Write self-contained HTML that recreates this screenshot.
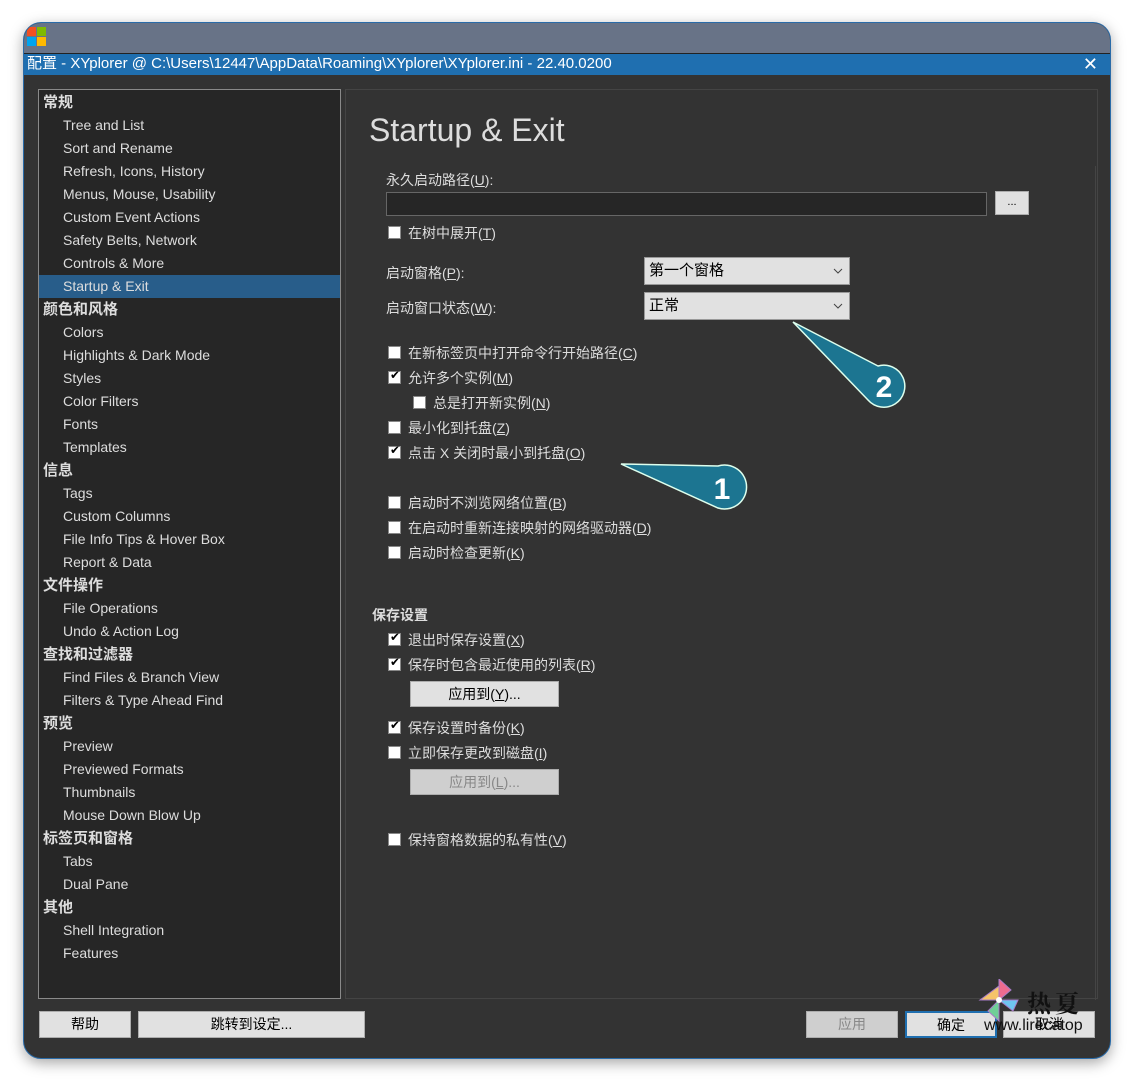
<!DOCTYPE html>
<html><head><meta charset="utf-8"><style>
*{margin:0;padding:0;box-sizing:border-box}
body{width:1134px;height:1082px;background:#fff;position:relative;overflow:hidden;font-family:"Liberation Sans","Noto Sans CJK SC",sans-serif;font-size:14px;color:#ddd}
.win{position:absolute;left:23px;top:22px;width:1088px;height:1037px;border-radius:18px;background:#333;overflow:hidden;box-shadow:0 4px 14px rgba(0,0,0,.35);border:1px solid #2a6ba8}
.tb{position:absolute;left:0;top:0;width:100%;height:30px;background:#687387}
.bb{position:absolute;left:0;top:30px;width:100%;height:22px;background:#1f6fb0;color:#fff;font-size:15px;line-height:20px;padding-left:3px;border-top:1px solid #222}
.a{position:absolute;white-space:nowrap}
.side{position:absolute;left:14px;top:66px;width:303px;height:910px;background:#262626;border:1px solid #8a8a8a}
.rows{position:absolute;left:0;top:1px;width:301px}
.r{position:absolute;left:0;width:301px;height:23px;line-height:23px;font-size:14px;color:#ddd}
.h{padding-left:4px;font-weight:bold;font-size:15px}
.i{padding-left:24px}
.sel{background:#285d8a}
.panel{position:absolute;left:321px;top:66px;width:753px;height:910px;border:1px solid #444}
.cb{position:absolute;width:13px;height:13px;background:#fff;border:1px solid #888}
.cb.c::after{content:"✔";position:absolute;left:1px;top:-4px;font-size:12px;color:#000}
.btn{position:absolute;background:#e1e1e1;border:1px solid #adadad;color:#000;text-align:center;font-size:14px}
.dis{color:#888;background:#cfcfcf}
.dd{position:absolute;background:#e1e1e1;border:1px solid #999;color:#000;padding-left:4px;font-size:15px}
.dd svg{position:absolute;right:6px;top:10px}
</style></head><body>
<div class="win">
<div class="tb"><svg width="22" height="22" style="position:absolute;left:3px;top:4px"><rect x="0" y="0" width="9" height="9" fill="#f25022"/><rect x="10" y="0" width="9" height="9" fill="#7fba00"/><rect x="0" y="10" width="9" height="9" fill="#00a4ef"/><rect x="10" y="10" width="9" height="9" fill="#ffb900"/></svg></div>
<div class="bb">配置 - XYplorer @ C:\Users\12447\AppData\Roaming\XYplorer\XYplorer.ini - 22.40.0200<span style="position:absolute;right:12px;top:0;font-size:18px">✕</span></div>
<div class="side"><div class="rows">
<div class="r h" style="top:0">常规</div>
<div class="r i" style="top:23px">Tree and List</div>
<div class="r i" style="top:46px">Sort and Rename</div>
<div class="r i" style="top:69px">Refresh, Icons, History</div>
<div class="r i" style="top:92px">Menus, Mouse, Usability</div>
<div class="r i" style="top:115px">Custom Event Actions</div>
<div class="r i" style="top:138px">Safety Belts, Network</div>
<div class="r i" style="top:161px">Controls &amp; More</div>
<div class="r i sel" style="top:184px">Startup &amp; Exit</div>
<div class="r h" style="top:207px">颜色和风格</div>
<div class="r i" style="top:230px">Colors</div>
<div class="r i" style="top:253px">Highlights &amp; Dark Mode</div>
<div class="r i" style="top:276px">Styles</div>
<div class="r i" style="top:299px">Color Filters</div>
<div class="r i" style="top:322px">Fonts</div>
<div class="r i" style="top:345px">Templates</div>
<div class="r h" style="top:368px">信息</div>
<div class="r i" style="top:391px">Tags</div>
<div class="r i" style="top:414px">Custom Columns</div>
<div class="r i" style="top:437px">File Info Tips &amp; Hover Box</div>
<div class="r i" style="top:460px">Report &amp; Data</div>
<div class="r h" style="top:483px">文件操作</div>
<div class="r i" style="top:506px">File Operations</div>
<div class="r i" style="top:529px">Undo &amp; Action Log</div>
<div class="r h" style="top:552px">查找和过滤器</div>
<div class="r i" style="top:575px">Find Files &amp; Branch View</div>
<div class="r i" style="top:598px">Filters &amp; Type Ahead Find</div>
<div class="r h" style="top:621px">预览</div>
<div class="r i" style="top:644px">Preview</div>
<div class="r i" style="top:667px">Previewed Formats</div>
<div class="r i" style="top:690px">Thumbnails</div>
<div class="r i" style="top:713px">Mouse Down Blow Up</div>
<div class="r h" style="top:736px">标签页和窗格</div>
<div class="r i" style="top:759px">Tabs</div>
<div class="r i" style="top:782px">Dual Pane</div>
<div class="r h" style="top:805px">其他</div>
<div class="r i" style="top:828px">Shell Integration</div>
<div class="r i" style="top:851px">Features</div>
</div></div>
<div class="panel"></div>
<div class="a" style="left:1071px;top:143px;width:1px;height:834px;background:#444"></div>
</div>
<div class="a" style="left:369px;top:112px;font-size:32px;color:#ddd">Startup &amp; Exit</div>
<div class="a" style="left:386px;top:170px">永久启动路径(<u>U</u>):</div>
<div class="a" style="left:386px;top:192px;width:601px;height:24px;background:#262626;border:1px solid #666"></div>
<div class="btn" style="left:995px;top:191px;width:34px;height:24px;line-height:20px;font-size:11px">...</div>
<div class="cb" style="left:388px;top:226px"></div><div class="a" style="left:408px;top:223px">在树中展开(<u>T</u>)</div>
<div class="a" style="left:386px;top:263px">启动窗格(<u>P</u>):</div>
<div class="dd" style="left:644px;top:257px;width:206px;height:28px;line-height:26px">第一个窗格<svg width="10" height="6"><path d="M1 1 L5 5 L9 1" fill="none" stroke="#444"/></svg></div>
<div class="a" style="left:386px;top:298px">启动窗口状态(<u>W</u>):</div>
<div class="dd" style="left:644px;top:292px;width:206px;height:28px;line-height:26px">正常<svg width="10" height="6"><path d="M1 1 L5 5 L9 1" fill="none" stroke="#444"/></svg></div>
<div class="cb" style="left:388px;top:346px"></div><div class="a" style="left:408px;top:343px">在新标签页中打开命令行开始路径(<u>C</u>)</div>
<div class="cb c" style="left:388px;top:371px"></div><div class="a" style="left:408px;top:368px">允许多个实例(<u>M</u>)</div>
<div class="cb" style="left:413px;top:396px"></div><div class="a" style="left:433px;top:393px">总是打开新实例(<u>N</u>)</div>
<div class="cb" style="left:388px;top:421px"></div><div class="a" style="left:408px;top:418px">最小化到托盘(<u>Z</u>)</div>
<div class="cb c" style="left:388px;top:446px"></div><div class="a" style="left:408px;top:443px">点击 X 关闭时最小到托盘(<u>O</u>)</div>
<div class="cb" style="left:388px;top:496px"></div><div class="a" style="left:408px;top:493px">启动时不浏览网络位置(<u>B</u>)</div>
<div class="cb" style="left:388px;top:521px"></div><div class="a" style="left:408px;top:518px">在启动时重新连接映射的网络驱动器(<u>D</u>)</div>
<div class="cb" style="left:388px;top:546px"></div><div class="a" style="left:408px;top:543px">启动时检查更新(<u>K</u>)</div>
<div class="a" style="left:372px;top:605px;font-weight:bold">保存设置</div>
<div class="cb c" style="left:388px;top:633px"></div><div class="a" style="left:408px;top:630px">退出时保存设置(<u>X</u>)</div>
<div class="cb c" style="left:388px;top:658px"></div><div class="a" style="left:408px;top:655px">保存时包含最近使用的列表(<u>R</u>)</div>
<div class="btn" style="left:410px;top:681px;width:149px;height:26px;line-height:24px">应用到(<u>Y</u>)...</div>
<div class="cb c" style="left:388px;top:721px"></div><div class="a" style="left:408px;top:718px">保存设置时备份(<u>K</u>)</div>
<div class="cb" style="left:388px;top:746px"></div><div class="a" style="left:408px;top:743px">立即保存更改到磁盘(<u>I</u>)</div>
<div class="btn dis" style="left:410px;top:769px;width:149px;height:26px;line-height:24px">应用到(<u>L</u>)...</div>
<div class="cb" style="left:388px;top:833px"></div><div class="a" style="left:408px;top:830px">保持窗格数据的私有性(<u>V</u>)</div>
<svg class="a" style="left:0;top:0" width="1134" height="1082">
<path d="M793 322 L878 366 A21 21 0 1 1 868 400 Z" fill="#1c7591" stroke="#dfe" stroke-width="1.5"/>
<text x="884" y="397" fill="#fff" font-size="30" font-weight="bold" text-anchor="middle" font-family="Liberation Sans">2</text>
<path d="M621 464 L718 466 A22 22 0 1 1 718 508 Z" fill="#1c7591" stroke="#dfe" stroke-width="1.5"/>
<text x="722" y="499" fill="#fff" font-size="30" font-weight="bold" text-anchor="middle" font-family="Liberation Sans">1</text>
</svg>
<div class="btn" style="left:39px;top:1011px;width:92px;height:27px;line-height:25px">帮助</div>
<div class="btn" style="left:138px;top:1011px;width:227px;height:27px;line-height:25px">跳转到设定...</div>
<div class="btn dis" style="left:806px;top:1011px;width:92px;height:27px;line-height:25px">应用</div>
<div class="btn" style="left:905px;top:1011px;width:92px;height:27px;line-height:25px;border:2px solid #1f6fb0">确定</div>
<div class="btn" style="left:1003px;top:1011px;width:92px;height:27px;line-height:25px">取消</div>
<svg class="a" style="left:978px;top:979px" width="64" height="50">
<polygon points="21,7 21,21 2,21" fill="#f5c46a" stroke="#a77bc8"/>
<polygon points="21,0 21,21 33,11" fill="#ee6b8f" stroke="#a77bc8"/>
<polygon points="21,21 40,21 35,32" fill="#6ec6f0" stroke="#a77bc8"/>
<polygon points="21,21 21,42 10,32" fill="#6fcf97" stroke="#a77bc8"/>
<circle cx="21" cy="21" r="3" fill="#fff"/>
</svg>
<div class="a" style="left:1027px;top:984px;font-family:'Noto Serif CJK SC',serif;font-size:24px;font-weight:bold;color:#111;letter-spacing:4px">热夏</div>
<div class="a" style="left:984px;top:1017px;font-size:16px;color:#111">www.lirecatop</div>
</body></html>
